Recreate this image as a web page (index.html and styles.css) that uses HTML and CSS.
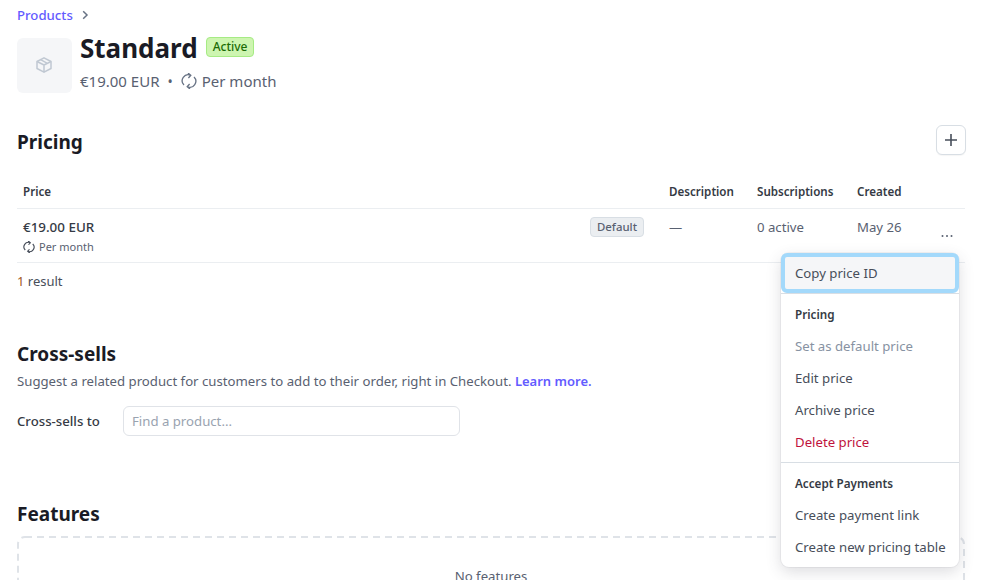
FILE: index.html
```html
<!DOCTYPE html>
<html lang="en">
<head>
<meta charset="utf-8">
<title>Standard</title>
<link rel="stylesheet" href="styles.css">
</head>
<body>
<main class="page">
  <nav class="crumbs">
    <a class="link" href="#">Products</a>
    <svg class="chev" viewBox="0 0 12 12" width="12" height="12"><path d="M4.2 2.2 8 6l-3.8 3.8" fill="none" stroke="#687385" stroke-width="1.5"/></svg>
  </nav>
  <header class="product">
    <div class="thumb">
      <svg viewBox="0 0 16 16" width="16" height="16" fill="none" stroke="#c0c8d2" stroke-width="1.5" stroke-linejoin="round"><path d="M8 .8 15 4.5v7L8 15.2 1 11.500v-7z"/><path d="M1 4.500 8 8l7-3.500M8 8v7.200M4.600 2.600 11.400 6.300"/></svg>
    </div>
    <div class="product-info">
      <div class="title-row"><h1>Standard</h1><span class="badge-active">Active</span></div>
      <div class="sub-row">
        <span>€19.00 EUR</span><span class="dot">•</span>
        <svg class="cycle" viewBox="0 0 16 16" width="16" height="16" fill="none" stroke="#687385" stroke-width="1.3"><path d="M3 12A6 6 0 0 1 9.500 2.200M7 0 9.800 2.300 7.400 5"/><path d="M13 4A6 6 0 0 1 6.500 13.800M9 16 6.200 13.700 8.600 11"/></svg>
        <span>Per month</span>
      </div>
    </div>
  </header>

  <section class="pricing">
    <div class="section-head">
      <h2>Pricing</h2>
      <button class="plus" aria-label="Add price"><svg viewBox="0 0 12 12" width="12" height="12"><path d="M6 0v12M0 6h12" stroke="#474e5a" stroke-width="1.6"/></svg></button>
    </div>
    <div class="table">
      <div class="row head">
        <div class="c-price">Price</div>
        <div class="c-desc">Description</div>
        <div class="c-subs">Subscriptions</div>
        <div class="c-created">Created</div>
      </div>
      <div class="row body">
        <div class="c-price">
          <div class="amount">€19.00 EUR</div>
          <div class="period">
            <svg viewBox="0 0 16 16" width="12" height="12" fill="none" stroke="#474e5a" stroke-width="1.500"><path d="M3 12A6 6 0 0 1 9.500 2.200M7 0 9.800 2.300 7.400 5"/><path d="M13 4A6 6 0 0 1 6.500 13.800M9 16 6.200 13.700 8.600 11"/></svg>
            <span>Per month</span>
          </div>
          <span class="badge-default">Default</span>
        </div>
        <div class="c-desc dash">—</div>
        <div class="c-subs">0 active</div>
        <div class="c-created">May 26</div>
        <svg class="more" viewBox="0 0 12 4" width="12" height="4" fill="#596171" role="img" aria-label="More"><circle cx="1.500" cy="2" r="1"/><circle cx="6" cy="2" r="1"/><circle cx="10.500" cy="2" r="1"/></svg>
      </div>
    </div>
    <p class="results"><span class="count">1</span> result</p>
  </section>

  <section class="cross">
    <h2>Cross-sells</h2>
    <p class="help">Suggest a related product for customers to add to their order, right in Checkout. <a class="link strong" href="#">Learn more.</a></p>
    <div class="field">
      <label for="find">Cross-sells to</label>
      <input id="find" placeholder="Find a product...">
    </div>
  </section>

  <section class="features">
    <h2>Features</h2>
    <div class="empty">
      <svg class="dash-frame" aria-hidden="true"><rect x="1" y="1" rx="7" ry="7"/></svg>
      No features
    </div>
  </section>
</main>

<div class="menu">
  <div class="item focus">Copy price ID</div>
  <div class="group">
    <div class="label">Pricing</div>
    <div class="item muted">Set as default price</div>
    <div class="item">Edit price</div>
    <div class="item">Archive price</div>
    <div class="item danger">Delete price</div>
  </div>
  <div class="group last">
    <div class="label">Accept Payments</div>
    <div class="item">Create payment link</div>
    <div class="item">Create new pricing table</div>
  </div>
</div>
</body>
</html>
```

FILE: styles.css
```css
* { box-sizing: border-box; }
html, body { margin: 0; height: 100%; overflow: hidden; }
body { font-family: "Noto Sans", Inter, "Liberation Sans", sans-serif; font-size: 14px; color: #353a44; background: #fff; position: relative; }
.page { padding: 6px 22px 0 17px; }
h1, h2, p { margin: 0; }
.link { color: #635bff; text-decoration: none; }
.strong { font-size: 13px; font-weight: 600; }

.crumbs { display: flex; align-items: center; gap: 6px; height: 17px; font-size: 13.2px; font-weight: 500; }
.product { display: flex; gap: 8px; margin-top: 15px; }
.thumb { width: 55px; height: 55px; background: #f5f6f8; border-radius: 6px; display: flex; align-items: center; justify-content: center; padding-right: 1px; padding-bottom: 1px; }
.product-info { margin-top: -6px; }
.title-row { display: flex; align-items: center; gap: 8px; height: 32px; }
h1 { font-size: 26px; line-height: 32px; font-weight: 700; color: #1a1b25; }
.badge-active { position: relative; top: -1px; font-size: 12px; line-height: 16px; font-weight: 500; color: #1c6b06; background: #cdf5b0; border: 1px solid #a6eb84; border-radius: 4px; padding: 1px 6px; height: 20px; }
.sub-row { display: flex; align-items: center; font-size: 15px; color: #596171; height: 24px; margin-top: 5px; }
.dot { margin: 0 8px; color: #596171; font-size: 14px; }
.cycle { margin-right: 5px; }

.pricing { margin-top: 32px; }
.section-head { display: flex; justify-content: space-between; align-items: center; height: 30px; }
h2 { font-size: 19px; line-height: 28px; font-weight: 700; color: #1a1b25; }
.section-head h2 { margin-top: 4px; }
.plus { width: 30px; height: 30px; margin-right: -1px; border: 1px solid #d8dee4; border-radius: 6px; background: #fff; display: flex; align-items: center; justify-content: center; padding: 0; box-shadow: 0 1px 1px rgba(0,0,0,.04); }

.table { margin-top: 28px; }
.row { display: flex; border-bottom: 1px solid #ebeef1; position: relative; }
.row.head { height: 26px; font-size: 11.6px; font-weight: 600; color: #353a44; line-height: 16px; padding-top: 1px; }
.row.body { height: 54px; font-size: 13.2px; line-height: 18px; color: #596171; padding-top: 9px; }
.c-price { padding-left: 6px; width: 652px; position: relative; }
.c-desc { width: 88px; }
.c-subs { width: 100px; }
.c-created { width: 80px; }
.amount { font-size: 13.4px; font-weight: 500; color: #353a44; }
.period { display: flex; align-items: center; gap: 4px; font-size: 11px; color: #596171; margin-top: 3px; line-height: 16px; }
.badge-default { position: absolute; right: 25px; top: -1px; font-size: 11.4px; line-height: 16px; font-weight: 500; color: #596171; background: #ebeef1; border: 1px solid #d8dee4; border-radius: 4px; padding: 1px 6px; height: 20px; }
.dash { color: #596171; }
.more { position: absolute; left: 924px; top: 25px; }
.results { margin-top: 9px; font-size: 13px; line-height: 18px; color: #474e5a; }
.count { color: #a2591d; }

.cross { margin-top: 50px; }
.help { font-size: 13.2px; line-height: 18px; color: #596171; margin-top: 4px; }
.field { display: flex; align-items: center; margin-top: 16px; }
.field label { font-size: 13.2px; font-weight: 500; color: #353a44; width: 106px; }
input { width: 337px; height: 30px; border: 1px solid #e0e3e8; border-radius: 6px; padding: 0 8px; font: inherit; font-size: 13.2px; outline: none; }
input::placeholder { color: #99a3b0; opacity: 1; }

.features { margin-top: 64px; }
.empty { position: relative; margin-top: 8px; height: 120px; font-size: 13.2px; line-height: 18px; color: #596171; text-align: center; padding-top: 31px; }
.dash-frame { position: absolute; left: 0; top: 0; width: 100%; height: 100%; fill: none; stroke: #dfe3e8; stroke-width: 2; stroke-dasharray: 7 5; }
.dash-frame rect { width: calc(100% - 2px); height: calc(100% - 2px); }

.menu { position: absolute; left: 781px; top: 253px; width: 178px; background: #fff; border-radius: 8px; box-shadow: 0 0 0 1px rgba(64,68,82,.06), 0 5px 15px rgba(64,68,82,.18); font-size: 13.2px; color: #474e5a; }
.item { height: 32px; line-height: 32px; padding: 0 14px; white-space: nowrap; }
.item.focus { height: 40px; line-height: 33px; background: #f5f6f8; border: 4px solid #a3d9fb; border-radius: 6px; padding: 0 10px; }
.muted { color: #8792a2; }
.danger { color: #c0123c; }
.group { border-top: 1px solid #d8dee4; padding-bottom: 4px; }
.label { font-size: 11.7px; font-weight: 600; color: #353a44; line-height: 16px; padding: 12px 14px 8px; }
```
